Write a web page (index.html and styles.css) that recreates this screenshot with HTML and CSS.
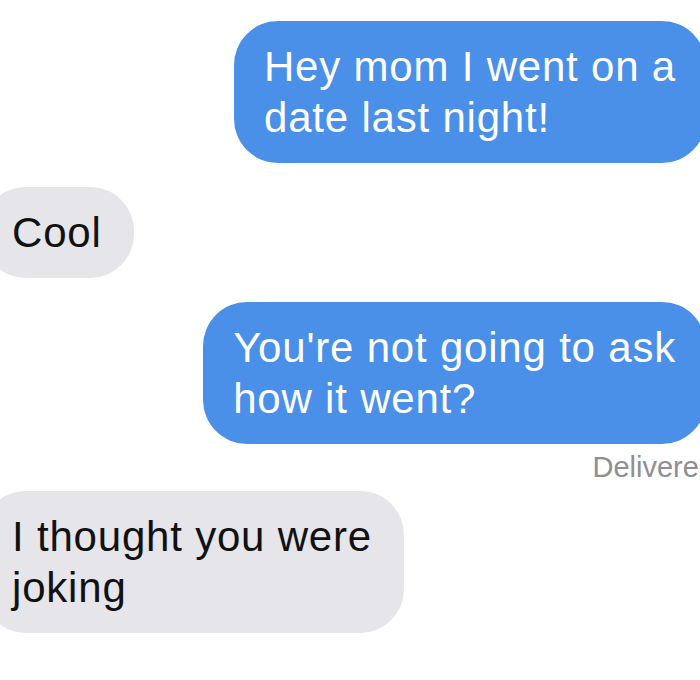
FILE: index.html
```html
<!DOCTYPE html>
<html lang="en">
<head>
    <meta charset="UTF-8">
    <meta name="viewport" content="width=device-width, initial-scale=1.0">
    <title>Messages</title>
    <link rel="stylesheet" href="styles.css">
</head>
<body>
    <div class="thread">
        <div class="msg sent">Hey mom I went on a<br>date last night!</div>
        <div class="msg received">Cool</div>
        <div class="msg sent">You're not going to ask<br>how it went?</div>
        <div class="status">Delivered</div>
        <div class="msg received">I thought you were<br>joking</div>
    </div>
</body>
</html>
```

FILE: styles.css
```css
html, body {
    margin: 0;
    height: 100%;
    overflow: hidden;
    background: #fff;
}
body {
    font-family: "Liberation Sans", Arial, sans-serif;
}
.thread {
    display: flex;
    flex-direction: column;
    padding-top: 21px;
}
.msg {
    padding: 20px 30px;
    border-radius: 44px;
    font-size: 42px;
    line-height: 51px;
    letter-spacing: 0.8px;
    white-space: nowrap;
}
.msg + .msg {
    margin-top: 24px;
}
.sent {
    align-self: flex-end;
    margin-right: -6px;
    background: #4a90e8;
    color: #fff;
}
.received {
    align-self: flex-start;
    margin-left: -18px;
    padding-right: 32px;
    background: #e5e5ea;
    color: #111;
}
.status {
    align-self: flex-end;
    margin: 6px -15px 7px 0;
    font-size: 29px;
    line-height: 34px;
    color: #8e8e93;
    white-space: nowrap;
}
```
